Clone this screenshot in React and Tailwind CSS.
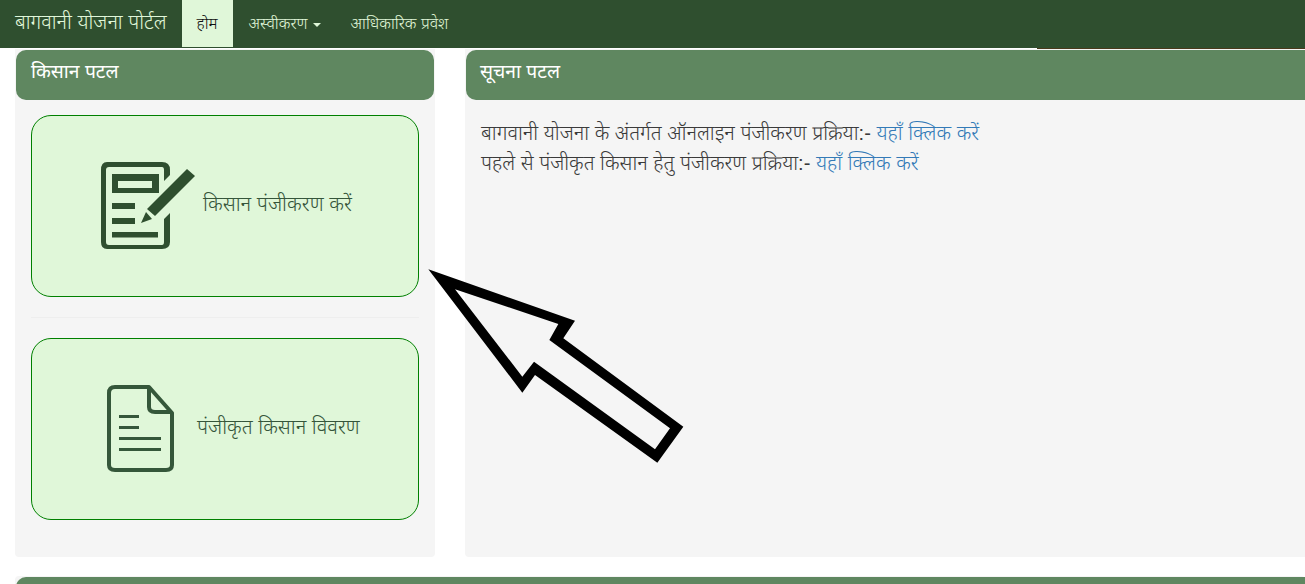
function FormIcon() {
  return (
    <svg width="96" height="90" viewBox="0 0 96 90" className="shrink-0">
      <path fill="#2f4f2f" d="M7 1H62Q70 1 70 9V14L64 20V9Q64 6 62 6H9Q6 6 6 9V81Q6 84 9 84H62Q64 84 64 81V58L70 52V81Q70 88 62 88H7Q1 88 1 81V9Q1 1 7 1Z" />
      <path fill="#2f4f2f" fillRule="evenodd" d="M12 13H59V32H12ZM18 20V27H52V20Z" />
      <rect x="12" y="42" width="23" height="6" fill="#2f4f2f" />
      <rect x="12" y="57" width="23" height="6" fill="#2f4f2f" />
      <rect x="12" y="71" width="46" height="5.5" fill="#2f4f2f" />
      <path fill="#2f4f2f" d="M87 8L95 15L55 55L47 48Z" />
      <path fill="#2f4f2f" d="M46 51L52 58L41 62Z" />
    </svg>
  );
}
function DocIcon() {
  return (
    <svg width="68" height="88" viewBox="0 0 68 88" className="shrink-0">
      <path fill="none" stroke="#35573a" strokeWidth="4" strokeLinejoin="round" d="M8 2H42L65 28V80Q65 85 59 85H8Q2 85 2 80V8Q2 2 8 2Z" />
      <path fill="none" stroke="#35573a" strokeWidth="4" strokeLinejoin="round" d="M42 2V22Q42 27 48 27H65" />
      <g fill="#35573a">
        <rect x="12" y="30" width="20" height="3" />
        <rect x="12" y="41" width="20" height="3" />
        <rect x="12" y="52" width="42" height="3" />
        <rect x="12" y="63" width="42" height="3" />
      </g>
    </svg>
  );
}
function Card({ icon, label, gap, pad, size }) {
  return (
    <div className={`flex h-[182px] items-center rounded-[20px] border border-[#008000] bg-[#e0f7d9] ${pad}`}>
      {icon}
      <span className={`mb-[4px] leading-[26px] font-light text-[#35553a] ${size} ${gap}`}>{label}</span>
    </div>
  );
}
export default function App() {
  return (
    <div className="relative h-[584px] w-[1305px] overflow-hidden bg-white font-['Liberation_Sans','Noto_Sans_Devanagari','Noto_Sans',sans-serif] text-[#3a3a3a] font-light">
      <nav className="flex h-[48px] items-start bg-[#2f4f2f] text-[#e0f7d9]">
        <span className="px-[15px] pt-[10px] text-[20px] leading-[24px]">बागवानी योजना पोर्टल</span>
        <span className="flex h-[47px] w-[51px] items-center justify-center bg-[#e0f7d9] text-[16px] text-[#111]">होम</span>
        <span className="flex h-[47px] items-center pl-[16px] pr-[15px] text-[16px]">
          अस्वीकरण
          <span className="ml-[5px] mt-[2px] h-0 w-0 border-x-[4px] border-t-[4px] border-x-transparent border-t-[#e0f7d9]" />
        </span>
        <span className="flex h-[47px] items-center px-[15px] text-[16px]">आधिकारिक प्रवेश</span>
      </nav>
      <div className="flex h-[1px] justify-end">
        <div className="h-[1px] w-[268px] bg-[#4a3a1c]" />
      </div>
      <main className="flex items-start pl-[15px]">
        <section className="h-[508px] w-[420px] shrink-0 rounded-b-[4px] bg-[#f5f5f5] px-[1px] pt-[1px]">
          <h2 className="flex h-[50px] items-center rounded-[10px] bg-[#5f8760] px-[15px] pb-[6px] text-[19.3px] font-normal text-white">किसान पटल</h2>
          <div className="px-[15px] pt-[15px]">
            <Card icon={<FormIcon />} label="किसान पंजीकरण करें" pad="pl-[68px]" gap="ml-[7px]" size="text-[20.3px]" />
            <hr className="my-[20px] border-[#eeeeee]" />
            <Card icon={<DocIcon />} label="पंजीकृत किसान विवरण" pad="pl-[75px]" gap="ml-[22px]" size="text-[20.2px]" />
          </div>
        </section>
        <section className="ml-[30px] h-[508px] w-[860px] shrink-0 rounded-b-[4px] bg-[#f5f5f5] pl-[1px] pt-[1px]">
          <h2 className="flex h-[50px] items-center rounded-l-[10px] bg-[#5f8760] px-[14px] pb-[6px] text-[19.3px] font-normal text-white">सूचना पटल</h2>
          <div className="px-[15px] pt-[18px] text-[20.08px] leading-[30px]">
            <p>बागवानी योजना के अंतर्गत ऑनलाइन पंजीकरण प्रक्रिया:- <a className="text-[#337ab7]">यहाँ क्लिक करें</a></p>
            <p>पहले से पंजीकृत किसान हेतु पंजीकरण प्रक्रिया:- <a className="text-[#337ab7]">यहाँ क्लिक करें</a></p>
          </div>
        </section>
      </main>
      <div className="ml-[15px] mt-[19px] rounded-t-[4px] bg-[#f5f5f5] pl-[1px] pt-[1px]">
        <div className="h-[20px] rounded-tl-[10px] bg-[#5f8760]" />
      </div>
      <svg className="pointer-events-none absolute left-[420px] top-[260px]" width="270" height="210" viewBox="0 0 810 630">
        <path fillRule="evenodd" fill="#000" d="M25 28L465 182L430 235L790 500L712 608L345 345L307 398ZM105 88L307 350L342 305L705 568L750 505L388 240L415 192Z" />
      </svg>
    </div>
  );
}
